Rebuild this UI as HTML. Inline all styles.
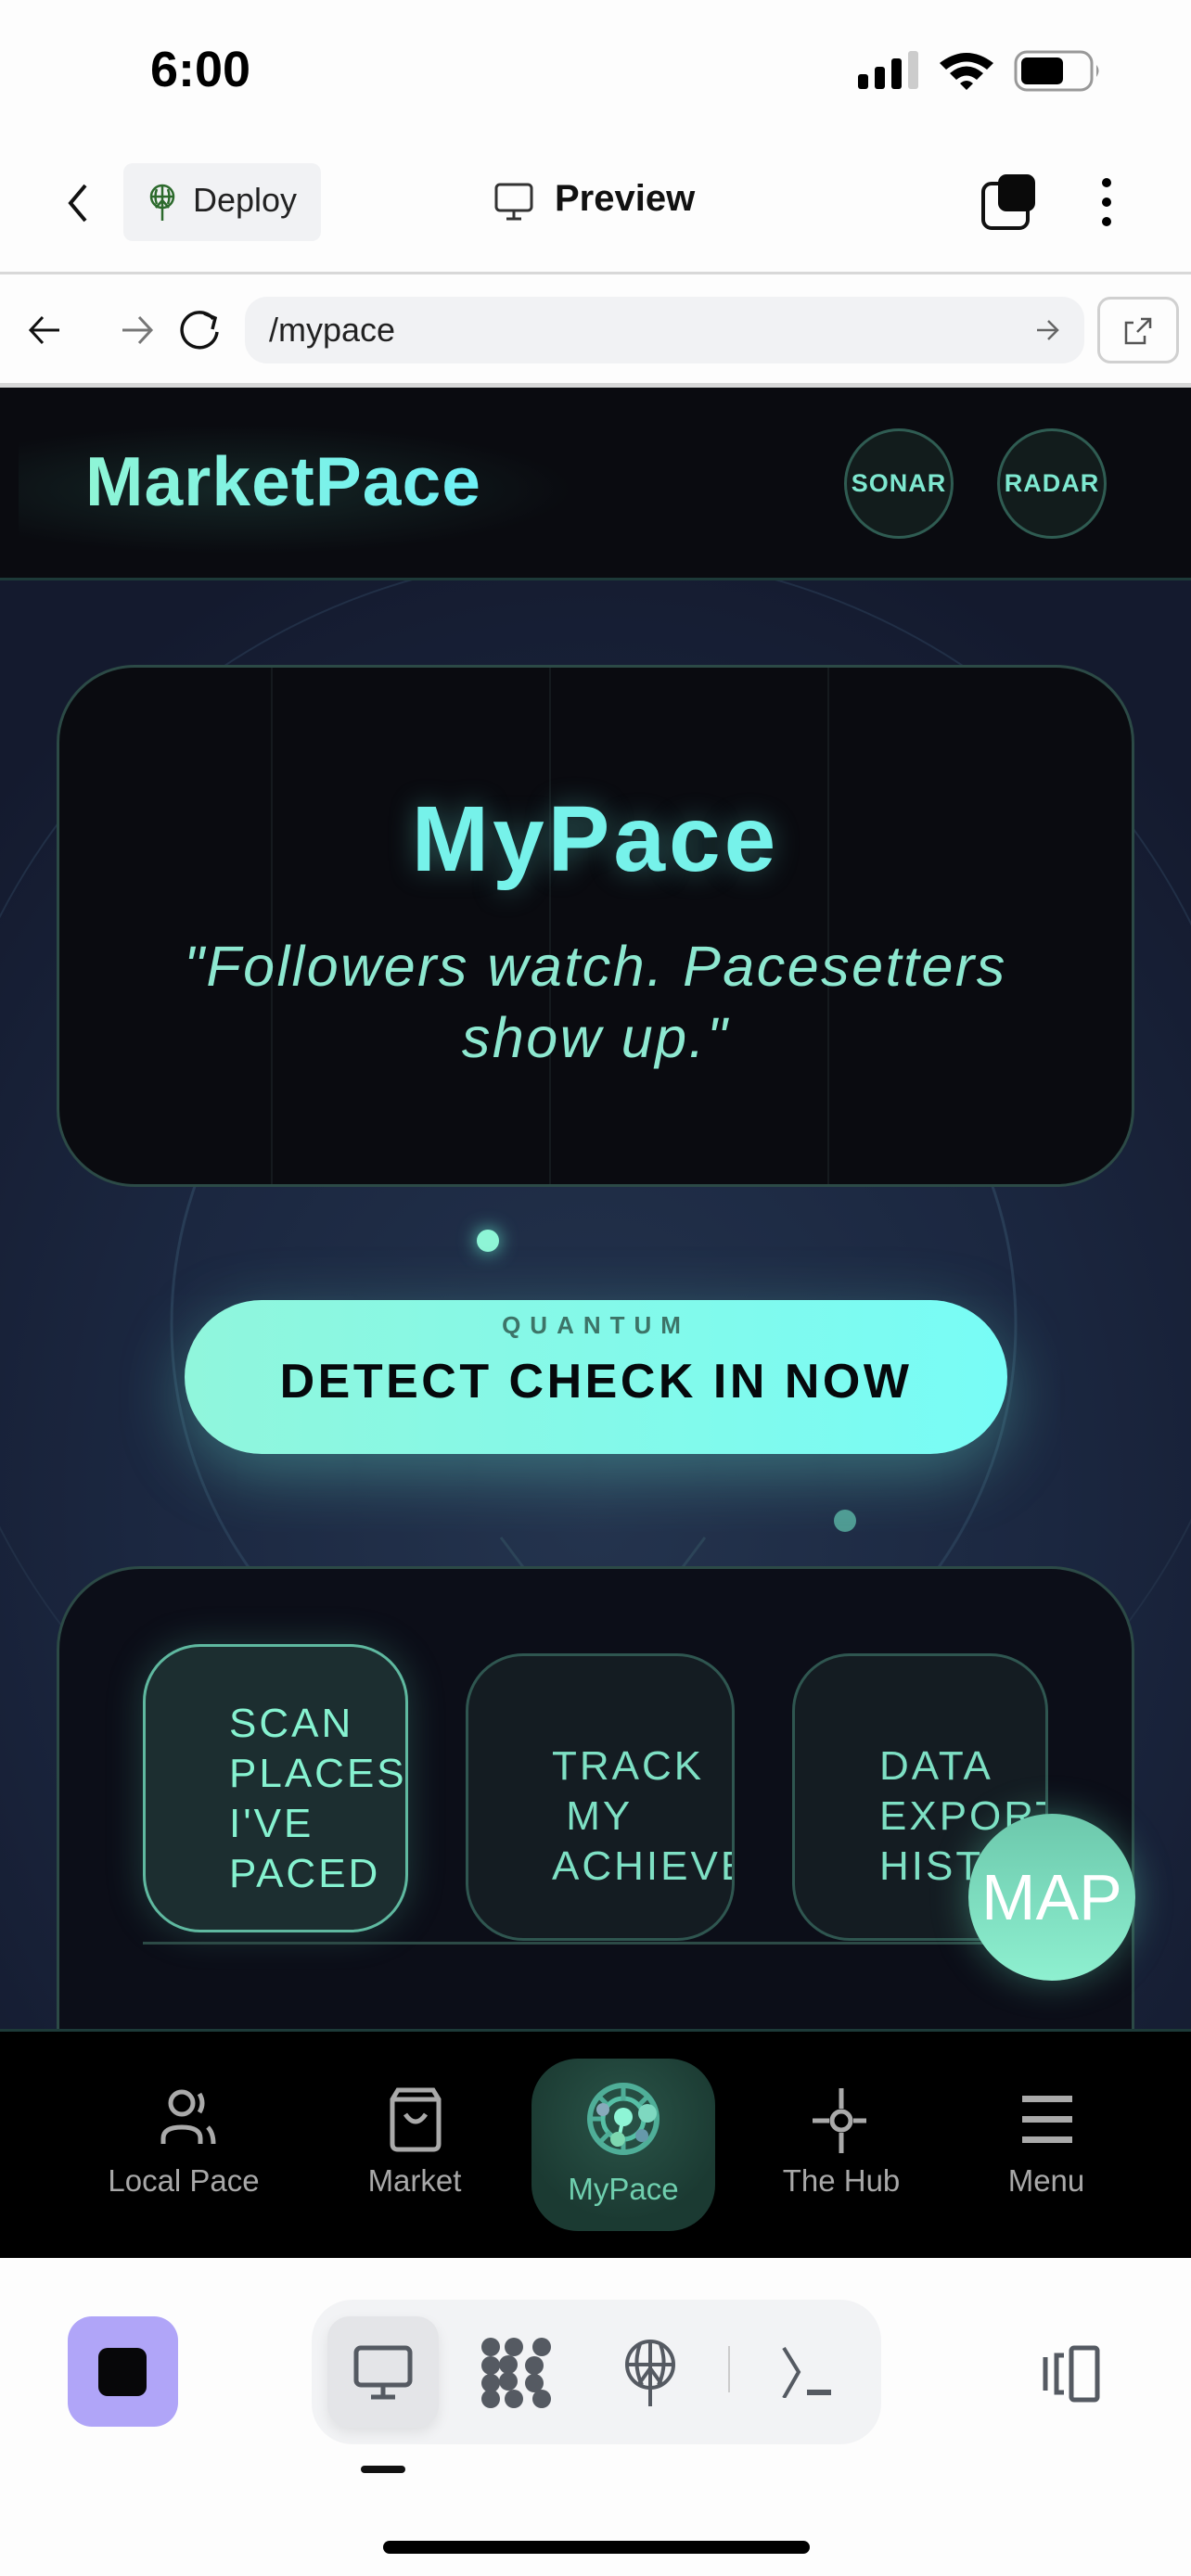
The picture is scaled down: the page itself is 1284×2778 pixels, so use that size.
<!DOCTYPE html>
<html><head><meta charset="utf-8"><style>
*{margin:0;padding:0;box-sizing:border-box}
body{width:1284px;height:2778px;overflow:hidden;background:#fdfdfd;font-family:"Liberation Sans",sans-serif;position:relative}
.abs{position:absolute}
.main{left:0;top:418px;width:1284px;height:1772px;background:radial-gradient(ellipse 900px 1100px at 640px 1200px,#24344e 0%,#1b2740 55%,#141a2e 100%);overflow:hidden}
.hdr{left:0;top:0;width:1284px;height:208px;background:#0a0b10;border-bottom:3px solid #1d3a38}
.circ{border:3px solid #2f5c52;border-radius:50%;background:#121c1c;color:#7ee8d0;font-weight:bold;font-size:27px;display:flex;align-items:center;justify-content:center;letter-spacing:1px}
.card{border:3px solid #2c4a46;background:#0a0b10;border-radius:84px}
.tile{border:3px solid #2f5650;border-radius:62px;background:#141c22;overflow:hidden;color:#7ee0c4;font-size:44px;letter-spacing:3px;line-height:54px}
.nl{color:#a8a8a8;font-size:33px;text-align:center;width:200px}
</style></head><body>
<div class="abs" style="left:162px;top:44px;font-size:54px;font-weight:bold;color:#000">6:00</div>
<svg class="abs" style="left:920px;top:50px" width="270" height="52">
<rect x="5" y="30" width="11" height="16" rx="3"/><rect x="23" y="22" width="11" height="24" rx="3"/><rect x="41" y="13" width="11" height="33" rx="3"/><rect x="59" y="5" width="11" height="41" rx="3" fill="#ccc"/>
<path d="M93 18 Q122 -4 151 18 L144 25 Q122 8 100 25Z M104 29 Q122 14 140 29 L133 36 Q122 27 111 36Z M115 40 Q122 34 129 40 L122 47Z"/>
<rect x="175" y="6" width="82" height="41" rx="12" fill="none" stroke="#999" stroke-width="3"/><rect x="181" y="12" width="45" height="29" rx="6"/><path d="M262 20 Q267 26 262 33Z" fill="#999"/>
</svg>
<svg class="abs" style="left:68px;top:196px" width="30" height="46"><path d="M24 4 L8 23 L24 42" fill="none" stroke="#111" stroke-width="4"/></svg>
<div class="abs" style="left:133px;top:176px;width:213px;height:84px;background:#f1f2f4;border-radius:10px"></div>
<svg class="abs" style="left:158px;top:196px" width="34" height="46" fill="none" stroke="#2c6a2c" stroke-width="2.5"><circle cx="17" cy="16" r="12"/><path d="M5 16h24M17 4v38M11 8q-3 8 0 16M23 8q3 8 0 16M10 28l7-8 7 8"/></svg>
<div class="abs" style="left:208px;top:195px;font-size:36px;color:#222">Deploy</div>
<svg class="abs" style="left:532px;top:197px" width="46" height="42" fill="none" stroke="#333" stroke-width="3"><rect x="3" y="2" width="38" height="28" rx="4"/><path d="M22 30v8M14 39h16"/></svg>
<div class="abs" style="left:598px;top:192px;font-size:40px;font-weight:bold;color:#111">Preview</div>
<svg class="abs" style="left:1056px;top:186px" width="64" height="64"><rect x="4" y="12" width="48" height="48" rx="9" fill="none" stroke="#111" stroke-width="4"/><rect x="20" y="2" width="40" height="40" rx="9" fill="#0a0a0a"/></svg>
<svg class="abs" style="left:1183px;top:188px" width="20" height="60"><circle cx="10" cy="9" r="5"/><circle cx="10" cy="30" r="5"/><circle cx="10" cy="51" r="5"/></svg>
<div class="abs" style="left:0;top:293px;width:1284px;height:3px;background:#d8d8d8"></div>
<svg class="abs" style="left:28px;top:336px" width="200" height="40" fill="none" stroke-width="3"><path d="M36 20H6M18 6L5 20l13 14" stroke="#111"/><path d="M104 20h30M122 6l13 14-13 14" stroke="#777"/></svg>
<svg class="abs" style="left:192px;top:332px" width="50" height="48" fill="none" stroke="#111" stroke-width="3.5"><path d="M38 12A19 19 0 1 0 42 26"/><path d="M28 6l12 5-3 12"/></svg>
<div class="abs" style="left:264px;top:320px;width:905px;height:72px;background:#f1f2f4;border-radius:24px"></div>
<div class="abs" style="left:290px;top:335px;font-size:36px;color:#222">/mypace</div>
<svg class="abs" style="left:1116px;top:340px" width="28" height="32" fill="none" stroke="#666" stroke-width="2.5"><path d="M2 16h22M14 6l10 10-10 10"/></svg>
<div class="abs" style="left:1183px;top:320px;width:88px;height:72px;border:3px solid #d0d0d0;border-radius:14px"></div>
<svg class="abs" style="left:1208px;top:340px" width="38" height="34" fill="none" stroke="#555" stroke-width="2.5"><path d="M14 8H6v22h20v-8M18 18L32 4M22 4h10v10"/></svg>
<div class="abs" style="left:0;top:413px;width:1284px;height:5px;background:#d8d8d8"></div>

<div class="abs main">
 <svg class="abs" style="left:0;top:0" width="1284" height="1772" fill="none" stroke="#263a52" stroke-width="3">
  <circle cx="640" cy="1010" r="455" stroke="#283c55"/>
  <circle cx="640" cy="900" r="720" stroke="#212f46" stroke-width="2"/>
  <path d="M540 1240 L600 1320 M760 1240 L700 1320" stroke="#2c4458"/>
 </svg>
 <div class="abs hdr">
  <div class="abs" style="left:20px;top:40px;width:600px;height:140px;background:radial-gradient(ellipse at 40% 50%,rgba(40,90,80,.35),transparent 70%)"></div>
  <div class="abs" style="left:92px;top:58px;font-size:75px;font-weight:bold;letter-spacing:1px;background:linear-gradient(90deg,#8ef5d6,#6ef0f6);-webkit-background-clip:text;color:transparent">MarketPace</div>
  <div class="abs circ" style="left:910px;top:44px;width:118px;height:119px">SONAR</div>
  <div class="abs circ" style="left:1075px;top:44px;width:118px;height:119px">RADAR</div>
 </div>
 <div class="abs card" style="left:61px;top:299px;width:1162px;height:563px;overflow:hidden">
  <div class="abs" style="left:228px;top:0;width:2px;height:560px;background:#151a1e"></div>
  <div class="abs" style="left:528px;top:0;width:2px;height:560px;background:#151a1e"></div>
  <div class="abs" style="left:828px;top:0;width:2px;height:560px;background:#151a1e"></div>
  <div class="abs" style="left:0;top:128px;width:1156px;text-align:center;font-size:100px;font-weight:bold;letter-spacing:4px;color:#76f2ea;text-shadow:0 0 30px rgba(110,240,230,.35)">MyPace</div>
  <div class="abs" style="left:0;top:284px;width:1156px;text-align:center;font-size:61px;font-style:italic;line-height:77px;letter-spacing:2.5px;color:#8de8d0">"Followers watch. Pacesetters<br>show up."</div>
 </div>
 <div class="abs" style="left:514px;top:908px;width:24px;height:24px;border-radius:50%;background:#8ef5d6;box-shadow:0 0 20px #5fd8c0"></div>
 <div class="abs" style="left:899px;top:1210px;width:24px;height:24px;border-radius:50%;background:#4f9a92"></div>
 <div class="abs" style="left:199px;top:984px;width:887px;height:166px;border-radius:84px;background:linear-gradient(90deg,#90f6dc,#78fcf6);box-shadow:0 20px 70px rgba(110,240,220,.35)">
  <div class="abs" style="left:0;top:12px;width:887px;text-align:center;font-size:26px;letter-spacing:10px;color:#3d7468;font-weight:bold">QUANTUM</div>
  <div class="abs" style="left:0;top:58px;width:887px;text-align:center;font-size:52px;font-weight:bold;letter-spacing:3.5px;color:#06090c">DETECT CHECK IN NOW</div>
 </div>
 <div class="abs card" style="left:61px;top:1271px;width:1162px;height:600px;border-radius:90px;background:#0c0e18"></div>
 <div class="abs tile" style="left:154px;top:1355px;width:286px;height:311px;border-color:#5fb9a0;background:#1c2e30;box-shadow:0 0 40px rgba(90,200,170,.25)"><div style="padding:56px 0 0 90px;color:#86f2d0;white-space:nowrap">SCAN<br>PLACES<br>I'VE<br>PACED</div></div>
 <div class="abs tile" style="left:502px;top:1365px;width:290px;height:310px"><div style="padding:92px 0 0 90px;white-space:nowrap">TRACK<br>&nbsp;MY<br>ACHIEVEMENTS</div></div>
 <div class="abs tile" style="left:854px;top:1365px;width:276px;height:310px"><div style="padding:92px 0 0 91px;white-space:nowrap">DATA<br>EXPORT<br>HISTORY</div></div>
 <div class="abs" style="left:154px;top:1676px;width:976px;height:3px;background:#2c4a46"></div>
 <div class="abs" style="left:1044px;top:1538px;width:180px;height:180px;border-radius:50%;background:linear-gradient(180deg,#6cc8ac,#8ef0d0);box-shadow:0 0 40px rgba(110,240,200,.35);color:#fff;font-size:70px;display:flex;align-items:center;justify-content:center">MAP</div>
</div>

<div class="abs" style="left:0;top:2188px;width:1284px;height:247px;background:#000;border-top:3px solid #1d3a38"></div>
<div class="abs" style="left:573px;top:2220px;width:198px;height:186px;border-radius:50px;background:radial-gradient(circle at 50% 35%,#2a5448,#1b3a32 70%)"></div>
<svg class="abs" style="left:160px;top:2250px" width="80" height="70" fill="none" stroke="#aaa" stroke-width="5"><circle cx="36" cy="18" r="12"/><path d="M55 8q6 10 0 20M16 62v-6q0-12 20-12t20 12v6M64 44q6 6 6 18"/></svg>
<svg class="abs" style="left:415px;top:2250px" width="66" height="72" fill="none" stroke="#aaa" stroke-width="5"><path d="M8 14l6-10h38l6 10v48q0 6-6 6H14q-6 0-6-6Z M8 14h50M22 30q11 16 22 0"/></svg>
<svg class="abs" style="left:630px;top:2243px" width="84" height="84"><circle cx="42" cy="42" r="36" fill="none" stroke="#4fae98" stroke-width="6"/><circle cx="42" cy="42" r="22" fill="none" stroke="#56c0a6" stroke-width="5"/><path d="M42 4v18M42 62v18M4 42h14M14 16l10 10M70 16l-10 10M18 66l10-10" stroke="#4fae98" stroke-width="5"/><circle cx="42" cy="40" r="10" fill="#8ef5d6"/><path d="M42 40l-5 24" stroke="#8ef5d6" stroke-width="4"/><circle cx="36" cy="64" r="8" fill="#7ed8b0"/><circle cx="20" cy="32" r="7" fill="#8ab"/><circle cx="68" cy="36" r="10" fill="#7ed8c0"/><circle cx="62" cy="60" r="7" fill="#69a"/></svg>
<svg class="abs" style="left:872px;top:2252px" width="70" height="70" fill="none" stroke="#aaa" stroke-width="5"><path d="M35 0v22M35 48v22M4 35h18M48 35h14"/><circle cx="35" cy="35" r="10"/></svg>
<svg class="abs" style="left:1100px;top:2258px" width="58" height="54" fill="#aaa"><rect x="2" y="2" width="54" height="7"/><rect x="2" y="24" width="54" height="7"/><rect x="2" y="46" width="54" height="7"/></svg>
<div class="abs nl" style="left:98px;top:2333px">Local Pace</div>
<div class="abs nl" style="left:347px;top:2333px">Market</div>
<div class="abs nl" style="left:572px;top:2342px;color:#6fcfae">MyPace</div>
<div class="abs nl" style="left:807px;top:2333px">The Hub</div>
<div class="abs nl" style="left:1028px;top:2333px">Menu</div>

<div class="abs" style="left:73px;top:2498px;width:119px;height:119px;border-radius:26px;background:#b0a5f8"></div>
<div class="abs" style="left:106px;top:2532px;width:52px;height:52px;border-radius:10px;background:#070709"></div>
<div class="abs" style="left:336px;top:2480px;width:614px;height:156px;border-radius:44px;background:#f2f3f5"></div>
<div class="abs" style="left:353px;top:2498px;width:120px;height:120px;border-radius:24px;background:#e4e5e8;box-shadow:0 6px 14px rgba(0,0,0,.08)"></div>
<svg class="abs" style="left:380px;top:2528px" width="66" height="62" fill="none" stroke="#555a62" stroke-width="5"><rect x="4" y="4" width="58" height="40" rx="5"/><path d="M33 44v12M20 57h26"/></svg>
<svg class="abs" style="left:518px;top:2520px" width="80" height="78" fill="#555a62"><g><ellipse cx="11" cy="11" rx="10" ry="10"/><ellipse cx="11" cy="31" rx="10" ry="10"/><ellipse cx="11" cy="50" rx="10" ry="10"/><ellipse cx="11" cy="67" rx="10" ry="10"/><ellipse cx="36" cy="11" rx="10" ry="10"/><ellipse cx="30" cy="30" rx="10" ry="10"/><ellipse cx="30" cy="48" rx="10" ry="10"/><ellipse cx="36" cy="67" rx="10" ry="10"/><ellipse cx="66" cy="11" rx="10" ry="10"/><ellipse cx="58" cy="31" rx="10" ry="10"/><ellipse cx="58" cy="50" rx="10" ry="10"/><ellipse cx="66" cy="67" rx="10" ry="10"/></g></svg>
<svg class="abs" style="left:672px;top:2522px" width="58" height="74" fill="none" stroke="#555a62" stroke-width="4"><circle cx="29" cy="28" r="25"/><path d="M4 28h50M29 3v70M18 6q-8 22 2 44M40 6q8 22-2 44M16 50l13-18 13 18"/></svg>
<div class="abs" style="left:785px;top:2530px;width:2px;height:50px;background:#ccc"></div>
<svg class="abs" style="left:842px;top:2530px" width="60" height="56" fill="none" stroke="#555a62" stroke-width="4"><path d="M3 2l16 26-16 28"/><path d="M28 50h26" stroke-width="6"/></svg>
<svg class="abs" style="left:1115px;top:2528px" width="72" height="64" fill="none" stroke="#555a62" stroke-width="5"><rect x="40" y="4" width="28" height="56" rx="3"/><path d="M32 12h-8v40h8M12 14v36"/></svg>
<div class="abs" style="left:389px;top:2659px;width:48px;height:8px;border-radius:4px;background:#111"></div>
<div class="abs" style="left:413px;top:2740px;width:460px;height:14px;border-radius:7px;background:#000"></div>
</body></html>
